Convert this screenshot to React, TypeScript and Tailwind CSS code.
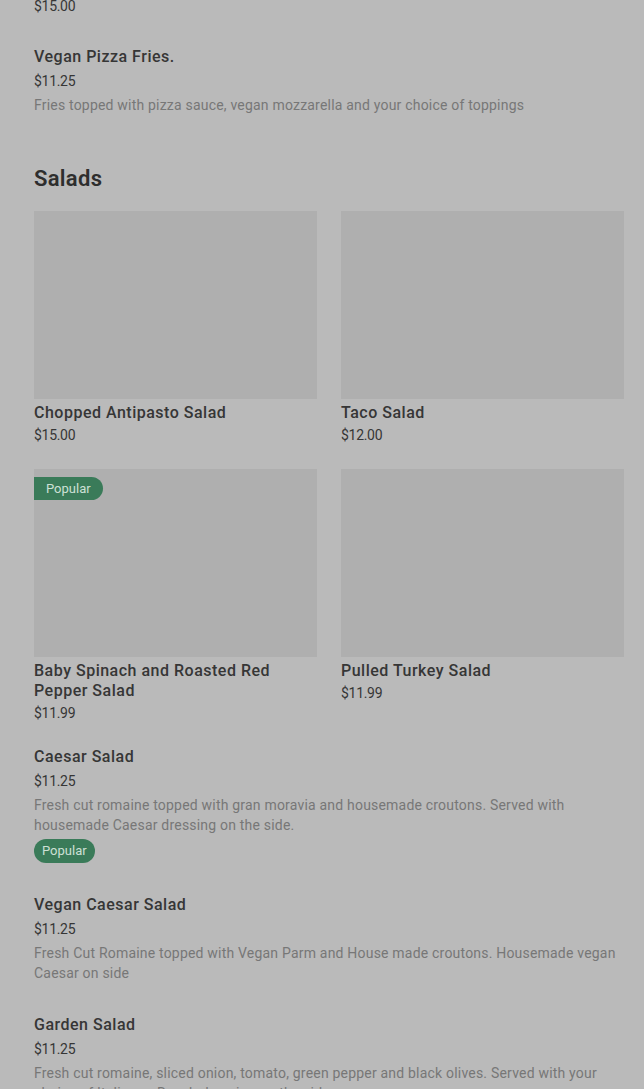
type Card = { name: string; price: string; popular?: boolean }
type Item = { name: string; price: string; desc: string; popular?: boolean }

const cards: Card[] = [
  { name: 'Chopped Antipasto Salad', price: '$15.00' },
  { name: 'Taco Salad', price: '$12.00' },
  { name: 'Baby Spinach and Roasted Red Pepper Salad', price: '$11.99', popular: true },
  { name: 'Pulled Turkey Salad', price: '$11.99' },
]

const items: Item[] = [
  {
    name: 'Caesar Salad',
    price: '$11.25',
    desc: 'Fresh cut romaine topped with gran moravia and housemade croutons. Served with housemade Caesar dressing on the side.',
    popular: true,
  },
  {
    name: 'Vegan Caesar Salad',
    price: '$11.25',
    desc: 'Fresh Cut Romaine topped with Vegan Parm and House made croutons. Housemade vegan Caesar on side',
  },
  {
    name: 'Garden Salad',
    price: '$11.25',
    desc: 'Fresh cut romaine, sliced onion, tomato, green pepper and black olives. Served with your choice of Italian or Ranch dressing on the side.',
  },
]

function ListItem({ item }: { item: Item }) {
  return (
    <div className="pt-[30px]">
      <div className="text-[16px] leading-6 font-medium tracking-[0.5px] text-[#363636]">{item.name}</div>
      <div className="mt-[2px] text-[14px] leading-5 tracking-[-0.3px] text-[#363636]">{item.price}</div>
      <div className="mt-1 text-[14px] leading-5 tracking-[0.2px] text-[#777777]">{item.desc}</div>
      {item.popular ? (
        <div className="mt-1 inline-flex h-6 items-center rounded-full bg-[#3a7b59] px-2 text-[13px] text-[#cde0d5]">
          Popular
        </div>
      ) : null}
    </div>
  )
}

function GridCard({ card }: { card: Card }) {
  return (
    <div>
      <div className="relative h-[188px] bg-[#afafaf]">
        {card.popular ? (
          <div className="absolute left-0 top-[8px] flex h-[23px] items-center rounded-r-full bg-[#3a7b59] pl-3 pr-3 text-[13px] text-[#cde0d5]">
            Popular
          </div>
        ) : null}
      </div>
      <div className="mt-1 text-[16px] leading-5 font-medium tracking-[0.5px] text-[#363636]">{card.name}</div>
      <div className="mt-[2px] text-[14px] leading-5 tracking-[-0.3px] text-[#363636]">{card.price}</div>
    </div>
  )
}

export default function App() {
  return (
    <div
      className="h-[1089px] overflow-hidden bg-[#bababa] pl-[34px] pr-5"
      style={{ fontFamily: 'Roboto, "Liberation Sans", sans-serif' }}
    >
      <div className="-mt-1 text-[14px] leading-5 tracking-[-0.3px] text-[#363636]">$15.00</div>
      <div className="pt-[29px]">
        <div className="text-[16px] leading-6 font-medium tracking-[0.5px] text-[#363636]">Vegan Pizza Fries.</div>
        <div className="mt-[2px] text-[14px] leading-5 tracking-[-0.3px] text-[#363636]">$11.25</div>
        <div className="mt-1 text-[14px] leading-5 tracking-[0.2px] text-[#777777]">
          Fries topped with pizza sauce, vegan mozzarella and your choice of toppings
        </div>
      </div>
      <h2 className="mt-[48px] text-[22px] leading-8 font-semibold tracking-[0.3px] text-[#2e2e2e]">Salads</h2>
      <div className="mt-[16px] grid grid-cols-2 gap-x-6 gap-y-[24px]">
        {cards.map((c) => (
          <GridCard key={c.name} card={c} />
        ))}
      </div>
      <div className="-mt-2">
        {items.map((it) => (
          <ListItem key={it.name} item={it} />
        ))}
      </div>
    </div>
  )
}
